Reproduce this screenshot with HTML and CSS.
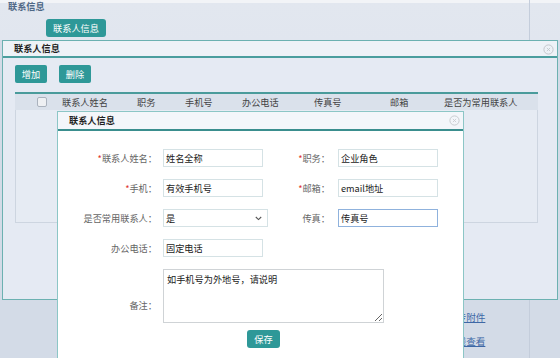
FILE: index.html
```html
<html lang="zh-CN">
<head>
    <meta charset="UTF-8">
    <title>联系人信息</title>
    <link rel="stylesheet" href="styles.css">
</head>
<body>

    <!-- underlying page -->
    <div class="page">
        <div class="page-main">
            <div class="page-top">
                <h3 class="sec-title">联系信息</h3>
                <div class="tab-row">
                    <button class="btn tab">联系人信息</button>
                </div>
            </div>
            <div class="links">
                <a href="#">上传附件</a>
                <a href="#">在线查看</a>
            </div>
        </div>
        <div class="page-side"></div>
    </div>

    <!-- contact list dialog -->
    <div class="dlg dlg-outer">
        <div class="dlg-title">
            联系人信息
            <svg class="dlg-close" width="11" height="11" viewBox="0 0 11 11"><circle cx="5.5" cy="5.5" r="4.6" fill="none" stroke="#c3c7cc" stroke-width="1"/><path d="M3.9 3.9 L7.1 7.1 M7.1 3.9 L3.9 7.1" stroke="#c3c7cc" stroke-width="0.9"/></svg>
        </div>
        <div class="dlg-body">
            <div class="toolbar">
                <button class="btn small">增加</button>
                <button class="btn small">删除</button>
            </div>
            <div class="grid-table">
                <div class="grid-head">
                    <div class="cell c-check"><span class="checkbox"></span></div>
                    <div class="cell c-name">联系人姓名</div>
                    <div class="cell c-job">职务</div>
                    <div class="cell c-mobile">手机号</div>
                    <div class="cell c-phone">办公电话</div>
                    <div class="cell c-fax">传真号</div>
                    <div class="cell c-mail">邮箱</div>
                    <div class="cell c-main">是否为常用联系人</div>
                </div>
                <div class="grid-body"></div>
            </div>
        </div>
    </div>

    <!-- edit contact dialog -->
    <div class="dlg dlg-inner">
        <div class="dlg-title">
            联系人信息
            <svg class="dlg-close" width="11" height="11" viewBox="0 0 11 11"><circle cx="5.5" cy="5.5" r="4.6" fill="none" stroke="#c8ccd0" stroke-width="1"/><path d="M3.9 3.9 L7.1 7.1 M7.1 3.9 L3.9 7.1" stroke="#c8ccd0" stroke-width="0.9"/></svg>
        </div>
        <div class="form">
            <label class="lbl"><em>*</em>联系人姓名：</label>
            <input class="field" type="text" value="姓名全称">
            <label class="lbl lbl-r"><em>*</em>职务：</label>
            <input class="field" type="text" value="企业角色">

            <label class="lbl"><em>*</em>手机：</label>
            <input class="field" type="text" value="有效手机号">
            <label class="lbl lbl-r"><em>*</em>邮箱：</label>
            <input class="field" type="text" value="email地址">

            <label class="lbl">是否常用联系人：</label>
            <div class="select">
                <span>是</span>
                <svg class="chev" width="7" height="5" viewBox="0 0 7 5"><path d="M0.8 1 L3.5 3.6 L6.2 1" fill="none" stroke="#555" stroke-width="1.1"/></svg>
            </div>
            <label class="lbl lbl-r">传真：</label>
            <input class="field active" type="text" value="传真号">

            <label class="lbl">办公电话：</label>
            <input class="field" type="text" value="固定电话">
            <div></div>
            <div></div>

            <label class="lbl lbl-mid">备注：</label>
            <textarea class="memo">如手机号为外地号，请说明</textarea>
        </div>
        <div class="form-actions">
            <button class="btn save">保存</button>
        </div>
    </div>

</body>
</html>
```

FILE: styles.css
```css
* {
    box-sizing: border-box;
}

html, body {
    margin: 0;
    height: 100%;
}

body {
    width: 560px;
    height: 358px;
    overflow: hidden;
    position: relative;
    font-family: "Noto Sans CJK SC", "Liberation Sans", sans-serif;
    font-size: 9.2px;
    color: #333;
    background: linear-gradient(#f2f4f7 0, #f2f4f7 3px, #e2e7ef 3px, #e1e6ef 40px, #d3dbe7 40px);
}

/* underlying page */
.page {
    display: flex;
    height: 358px;
}

.page-main {
    width: 530px;
    border-right: 1px solid #c4cddb;
}

.page-side {
    flex: 1;
}

.page-top {
    height: 40px;
    padding-left: 8px;
    padding-top: 2px;
}

.sec-title {
    margin: 0;
    height: 11px;
    font-size: 9.2px;
    line-height: 8px;
    font-weight: bold;
    color: #4f6886;
}

.tab-row {
    margin-top: 6px;
    padding-left: 38px;
}

.btn {
    border: none;
    border-radius: 3px;
    background-color: #2e9898;
    color: #fff;
    font-family: inherit;
    font-size: 9.2px;
    height: 18px;
    padding: 0;
    cursor: pointer;
}

.tab {
    width: 60px;
}

.links {
    margin-top: 265px;
    padding-left: 447px;
    display: flex;
    flex-direction: column;
    line-height: 24px;
}

.links a {
    color: #3e68a6;
    font-size: 9.6px;
}

/* dialogs */
.dlg {
    position: absolute;
    border: 1px solid #6cb1b1;
}

.dlg-title {
    position: relative;
    padding-left: 11px;
    font-weight: bold;
    color: #222;
}

.dlg-close {
    position: absolute;
    right: 3px;
    top: 3px;
}

.dlg-outer {
    left: 2px;
    top: 40px;
    width: 556px;
    height: 260px;
    background: #e5eaf3;
}

.dlg-outer .dlg-title {
    height: 17px;
    line-height: 15px;
    background: #eef2f7;
    border-bottom: 2px solid #4b9e9e;
}

.dlg-body {
    padding: 7px 12px 0;
}

.toolbar {
    display: flex;
    gap: 12px;
}

.btn.small {
    width: 32px;
    border-radius: 2px;
}

.grid-table {
    margin-top: 9px;
    width: 523px;
}

.grid-head {
    display: flex;
    height: 18px;
    line-height: 16px;
    border-top: 2px solid #4a9b9b;
    background: #dae1eb;
    color: #444;
}

.cell {
    white-space: nowrap;
}

.c-check { width: 47px; padding-left: 22px; }
.c-name { width: 75px; }
.c-job { width: 48px; }
.c-mobile { width: 57px; }
.c-phone { width: 72px; }
.c-fax { width: 76px; }
.c-mail { width: 54px; }
.c-main { flex: 1; }

.checkbox {
    display: inline-block;
    width: 10px;
    height: 10px;
    margin-top: 3px;
    vertical-align: top;
    border: 1px solid #aab2bd;
    border-radius: 2px;
    background: #eef0f3;
}

.grid-body {
    height: 113px;
    border: 1px solid #cdd5e0;
    border-top: none;
    background: #e6ebf3;
}

.dlg-inner {
    left: 57px;
    top: 111px;
    width: 407px;
    height: 247px;
    background: #fff;
    border-color: #8cc6c6;
    border-bottom: none;
}

.dlg-inner .dlg-title {
    height: 19px;
    line-height: 17px;
    background: #f3f6fa;
    border-bottom: 2px solid #3a8e8e;
}

/* form */
.form {
    display: grid;
    grid-template-columns: 105px 100px 75px 100px;
    grid-auto-rows: 18px;
    row-gap: 12px;
    padding-top: 18px;
}

.lbl {
    text-align: right;
    padding-right: 6px;
    line-height: 18px;
    color: #666;
    white-space: nowrap;
}

.lbl-r {
    padding-right: 8px;
}

.lbl em {
    font-style: normal;
    color: #e0322f;
}

.lbl-mid {
    grid-row: span 2;
    align-self: center;
    margin-top: 24px;
}

.field {
    width: 100px;
    height: 18px;
    border: 1px solid #d5e2e5;
    padding: 0 2px;
    font-family: inherit;
    font-size: 9.2px;
    color: #222;
    outline: none;
}

.field.active {
    border-color: #8fb2dd;
}

.select {
    position: relative;
    width: 105px;
    height: 18px;
    border: 1px solid #d5e2e5;
    padding-left: 2px;
    line-height: 16px;
    color: #222;
}

.chev {
    position: absolute;
    right: 5px;
    top: 6px;
}

.memo {
    grid-column: 2 / span 3;
    grid-row: span 2;
    width: 221px;
    height: 54px;
    border: 1px solid #cfd3d6;
    padding: 2px 3px;
    font-family: inherit;
    font-size: 9.2px;
    color: #222;
    resize: both;
}

.form-actions {
    margin-top: 13px;
    padding-left: 189px;
}

.btn.save {
    width: 33px;
}
```
